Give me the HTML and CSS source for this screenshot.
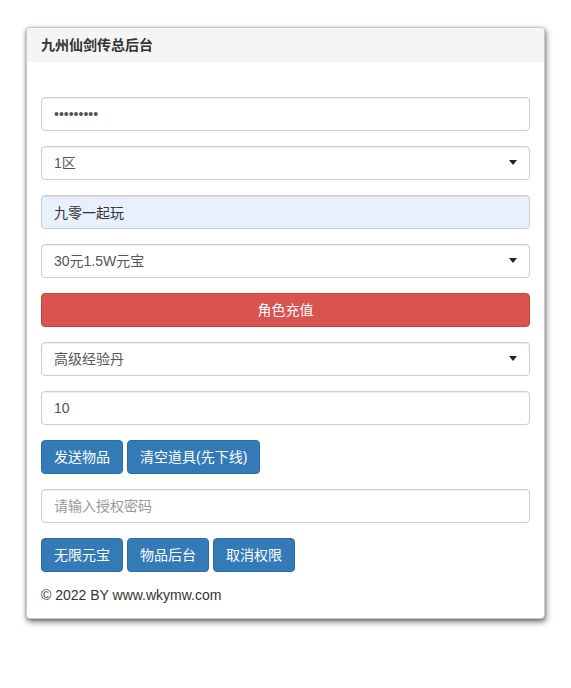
FILE: index.html
```html
<!DOCTYPE html>
<html lang="zh-CN">
<head>
<meta charset="utf-8">
<title>九州仙剑传总后台</title>
<link rel="stylesheet" href="styles.css">
</head>
<body>
<div class="panel">
  <div class="panel-heading">九州仙剑传总后台</div>
  <div class="panel-body">
    <form class="form" onsubmit="return false">
      <div class="form-group"><input class="form-control" type="password" value="123456789"></div>
      <div class="form-group select-wrap"><select class="form-control"><option>1区</option></select></div>
      <div class="form-group"><input class="form-control autofill" type="text" value="九零一起玩"></div>
      <div class="form-group select-wrap"><select class="form-control"><option>30元1.5W元宝</option></select></div>
      <div class="form-group"><button class="btn btn-danger btn-block" type="button">角色充值</button></div>
      <div class="form-group select-wrap"><select class="form-control"><option>高级经验丹</option></select></div>
      <div class="form-group"><input class="form-control" type="text" value="10"></div>
      <div class="form-group btn-row">
        <button class="btn btn-primary" type="button">发送物品</button>
        <button class="btn btn-primary" type="button">清空道具(先下线)</button>
      </div>
      <div class="form-group"><input class="form-control" type="password" placeholder="请输入授权密码"></div>
      <div class="btn-row">
        <button class="btn btn-primary" type="button">无限元宝</button>
        <button class="btn btn-primary" type="button">物品后台</button>
        <button class="btn btn-primary" type="button">取消权限</button>
      </div>
    </form>
    <div class="footer">© 2022 BY www.wkymw.com</div>
  </div>
</div>
</body>
</html>
```

FILE: styles.css
```css
* {
  box-sizing: border-box;
}

html, body {
  margin: 0;
  padding: 0;
  background: #fff;
}

body {
  font-family: "Liberation Sans", "Noto Sans CJK SC", sans-serif;
  font-size: 14px;
  line-height: 20px;
  color: #333;
  padding-bottom: 40px;
}

.panel {
  width: 519px;
  margin: 27px auto 0;
  background: #fff;
  border: 1px solid #c8c8c8;
  border-radius: 4px;
  box-shadow: 1px 3px 6px rgba(0, 0, 0, 0.5), 0 1px 3px rgba(0, 0, 0, 0.25);
  overflow: hidden;
}

.panel-heading {
  background: #f5f5f5;
  padding: 7px 14px 7px;
  font-weight: bold;
  font-size: 14px;
  color: #333;
}

.panel-body {
  padding: 35px 14px 13px;
}

.form {
  margin: 0;
}

.form-group {
  margin-bottom: 15px;
}

.form-control {
  display: block;
  width: 100%;
  height: 34px;
  padding: 6px 12px;
  font-family: inherit;
  font-size: 14px;
  line-height: 20px;
  color: #555;
  background: #fff;
  border: 1px solid #ccc;
  border-radius: 4px;
  box-shadow: inset 0 1px 1px rgba(0, 0, 0, 0.075);
  outline: none;
}

.form-control::placeholder {
  color: #999;
}

.autofill {
  background: #e8f0fe;
  color: #333;
}

select.form-control {
  -webkit-appearance: none;
  appearance: none;
  padding-left: 12px;
}

.select-wrap {
  position: relative;
}

.select-wrap::after {
  content: "";
  position: absolute;
  right: 13px;
  top: 14px;
  border-left: 4px solid transparent;
  border-right: 4px solid transparent;
  border-top: 5px solid #222;
  pointer-events: none;
}

.btn {
  display: inline-block;
  height: 34px;
  padding: 6px 12px;
  font-family: inherit;
  font-size: 14px;
  line-height: 20px;
  color: #fff;
  border: 1px solid transparent;
  border-radius: 4px;
  cursor: pointer;
  white-space: nowrap;
}

.btn-block {
  display: block;
  width: 100%;
}

.btn-danger {
  background: #d9534f;
  border-color: #d43f3a;
}

.btn-primary {
  background: #337ab7;
  border-color: #2e6da4;
}

.btn-row {
  display: flex;
  gap: 4px;
}

.footer {
  margin-top: 13px;
  color: #333;
}
```
